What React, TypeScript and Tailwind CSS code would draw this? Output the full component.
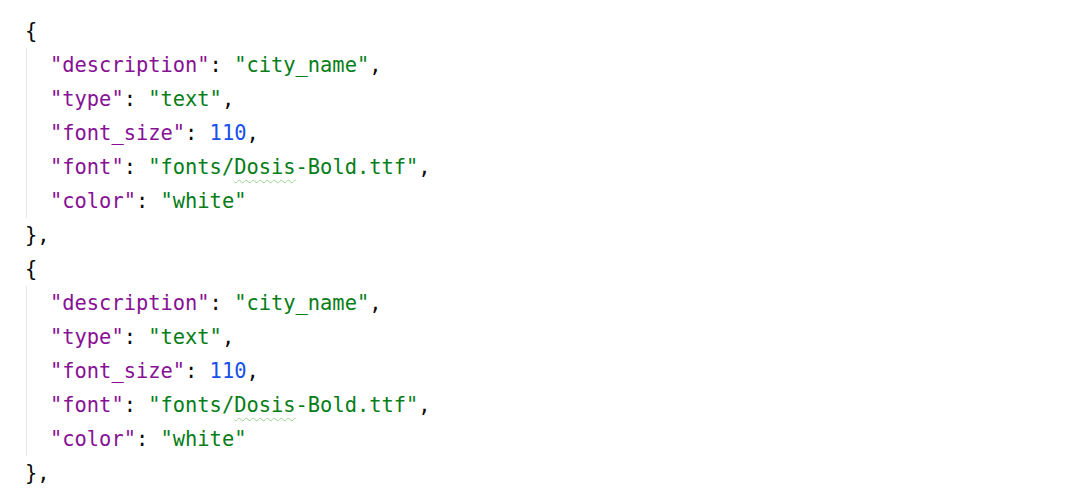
import React from "react";

const P = ({ children }: { children: React.ReactNode }) => (
  <span className="text-[#080808]">{children}</span>
);
const K = ({ children }: { children: React.ReactNode }) => (
  <span className="text-[#871094]">{children}</span>
);
const S = ({ children }: { children: React.ReactNode }) => (
  <span className="text-[#067d17]">{children}</span>
);
const N = ({ children }: { children: React.ReactNode }) => (
  <span className="text-[#1750eb]">{children}</span>
);

function Block() {
  return (
    <div>
      <div className="h-[34px]">
        <P>{"{"}</P>
      </div>
      <div className="ml-[1px] border-l border-[#e6e6e6] pl-[23px]">
        <div className="h-[34px]">
          <K>"description"</K>
          <P>: </P>
          <S>"city_name"</S>
          <P>,</P>
        </div>
        <div className="h-[34px]">
          <K>"type"</K>
          <P>: </P>
          <S>"text"</S>
          <P>,</P>
        </div>
        <div className="h-[34px]">
          <K>"font_size"</K>
          <P>: </P>
          <N>110</N>
          <P>,</P>
        </div>
        <div className="h-[34px]">
          <K>"font"</K>
          <P>: </P>
          <S>
            "fonts/
            <span className="underline decoration-wavy decoration-[#9ccf93] decoration-1 underline-offset-[5px]">
              Dosis
            </span>
            -Bold.ttf"
          </S>
          <P>,</P>
        </div>
        <div className="h-[34px]">
          <K>"color"</K>
          <P>: </P>
          <S>"white"</S>
        </div>
      </div>
      <div className="h-[34px]">
        <P>{"},"}</P>
      </div>
    </div>
  );
}

export default function App() {
  return (
    <div
      className="w-[1084px] h-[504px] overflow-hidden bg-white pt-[14px] pl-[25px] text-[20.4px] leading-[34px] whitespace-pre"
      style={{ fontFamily: '"DejaVu Sans Mono", "Liberation Mono", monospace' }}
    >
      <Block />
      <Block />
    </div>
  );
}
